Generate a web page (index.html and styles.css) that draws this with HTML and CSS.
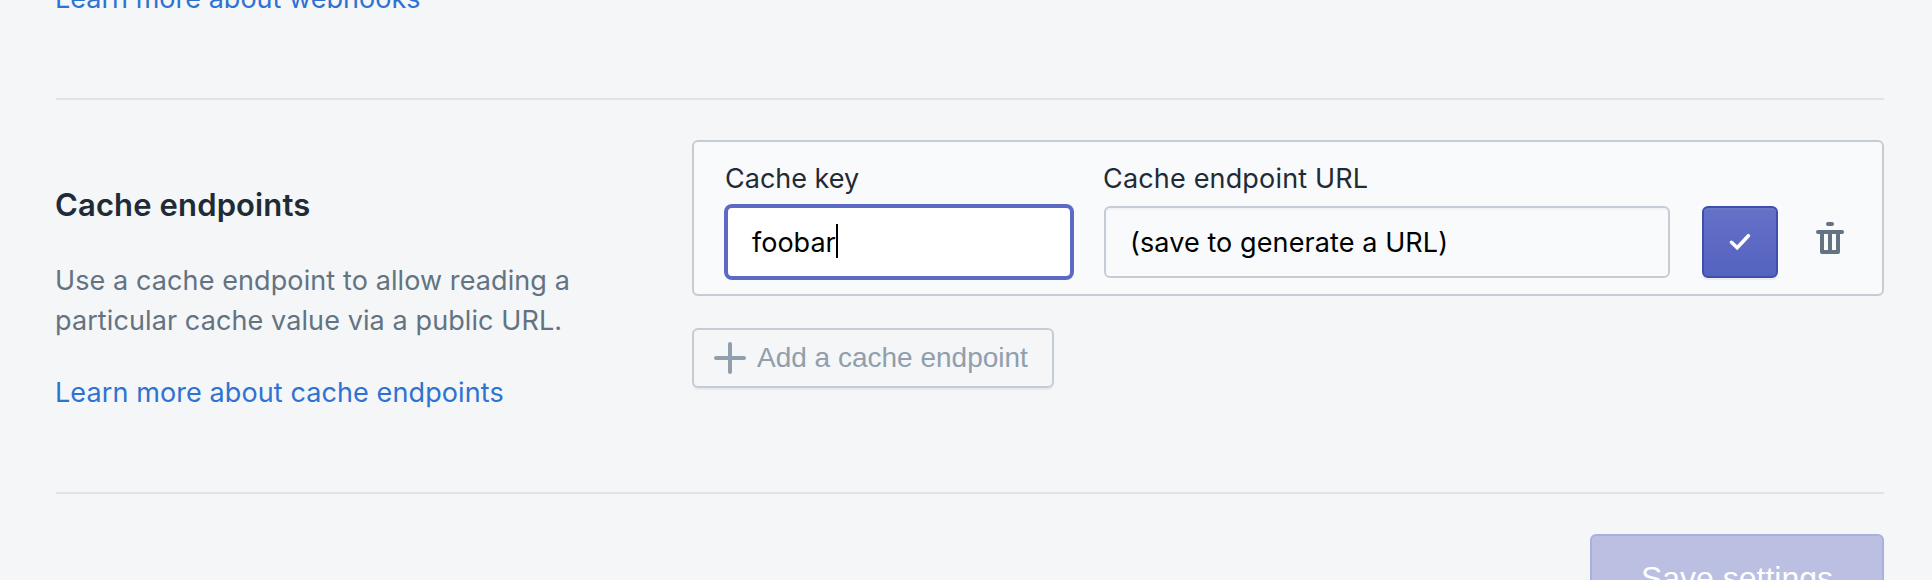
FILE: index.html
```
<!DOCTYPE html>
<html lang="en">
<head>
<meta charset="utf-8">
<title>Settings</title>
<link rel="stylesheet" href="styles.css">
</head>
<body>
<main class="page">
  <section class="section section-webhooks">
    <a class="link link-webhooks">Learn more about webhooks</a>
  </section>
  <section class="section section-endpoints">
    <div class="intro">
      <h2 class="title">Cache endpoints</h2>
      <p class="description">Use a cache endpoint to allow reading a<br>particular cache value via a public URL.</p>
      <a class="link">Learn more about cache endpoints</a>
    </div>
    <div class="content">
      <div class="card">
        <div class="field field-key">
          <label class="label label-key">Cache key</label>
          <div class="input input-focused"><span>foobar</span><i class="caret"></i></div>
        </div>
        <div class="field field-url">
          <label class="label label-url">Cache endpoint URL</label>
          <div class="input input-readonly"><span>(save to generate a URL)</span></div>
        </div>
        <button class="confirm" aria-label="Save endpoint">
          <svg class="icon" viewBox="0 0 20 20"><path d="M5.75 10.15 8.6 12.85 14.2 6.85" fill="none" stroke="#fff" stroke-width="1.8" stroke-linecap="round"/></svg>
        </button>
        <button class="remove" aria-label="Delete endpoint">
          <svg class="icon" viewBox="0 0 20 20"><path fill="#637381" fill-rule="evenodd" d="M16 6a1 1 0 1 1 0 2h-1v9a1 1 0 0 1-1 1H6a1 1 0 0 1-1-1V8H4a1 1 0 1 1 0-2h12zM9 4a1 1 0 1 1 0-2h2a1 1 0 1 1 0 2H9zm2 12h2V8h-2v8zm-4 0h2V8H7v8z"/></svg>
        </button>
      </div>
      <button class="add">
        <svg class="icon" viewBox="0 0 20 20"><path fill="#919eab" d="M17 9h-6V3a1 1 0 1 0-2 0v6H3a1 1 0 1 0 0 2h6v6a1 1 0 1 0 2 0v-6h6a1 1 0 1 0 0-2"/></svg>
        <span>Add a cache endpoint</span>
      </button>
    </div>
  </section>
  <footer class="footer">
    <button class="save">Save settings</button>
  </footer>
</main>
</body>
</html>
```
FILE: styles.css
```
* { box-sizing: border-box; }
html, body { margin: 0; height: 580px; overflow: hidden; }
body {
  background: #f4f6f8;
  color: #212b36;
  font: 27px/40px Inter, "Liberation Sans", sans-serif;
  letter-spacing: .1px;
  white-space: nowrap;
}
button { margin: 0; padding: 0; background: none; border: 0; font-family: "Liberation Sans", Arial, sans-serif; }
.page { display: flow-root; height: 580px; overflow: hidden; padding: 0 48px 0 56px; }
.section { border-bottom: 2px solid #dfe3e8; }
.section-webhooks { display: flow-root; height: 100px; }
.link { display: block; margin-left: -1px; color: #2e72d2; }
.link-webhooks { margin-top: -21px; letter-spacing: .02px; }
.section-endpoints { display: grid; grid-template-columns: 636px 1192px; height: 394px; }
.intro { padding-top: 85px; }
.title { margin: 0 0 36px -1px; font-size: 31px; font-weight: 600; line-height: 40px; letter-spacing: .13px; }
.description { margin: 0 0 32px -1px; color: #637381; }
.content { padding-top: 40px; }
.card {
  display: flex;
  align-items: flex-end;
  height: 156px;
  padding: 0 32px 16px;
  border: 2px solid #c4cdd5;
  border-radius: 6px;
  background: #f9fafc;
}
.field-key { width: 346px; margin-right: 32px; }
.field-url { width: 566px; margin-right: 32px; }
.label { display: block; margin: 0 0 7px -1px; }
.label-key { letter-spacing: 0; }
.label-url { letter-spacing: .17px; }
.input { display: flex; align-items: center; height: 72px; padding: 2px 0 0 24px; border: 2px solid #c4cdd5; border-radius: 6px; color: #000; }
.input-focused { border-color: #5c6ac4; background: #fff; box-shadow: 0 0 0 2px #5c6ac4; letter-spacing: 0; }
.input-readonly { box-shadow: inset 0 2px 0 rgba(99, 115, 129, .05); }
.caret { width: 2px; height: 34px; margin: -4px 0 0; background: #000; }
.icon { display: block; width: 40px; height: 40px; flex: none; }
.confirm {
  display: flex;
  align-items: center;
  justify-content: center;
  width: 76px;
  height: 72px;
  margin-right: 32px;
  border: 2px solid #3f4eae;
  border-radius: 6px;
  background: linear-gradient(#6371c7, #5563c1);
  box-shadow: inset 0 2px 0 #6b78c9, 0 2px 0 rgba(22, 29, 37, .06);
}
.remove { margin-bottom: 20px; }
.add {
  display: flex;
  align-items: center;
  width: 362px;
  height: 60px;
  margin-top: 32px;
  padding-left: 16px;
  gap: 7px;
  border: 2px solid #c4cdd5;
  border-radius: 6px;
  box-shadow: 0 2px 0 rgba(22, 29, 37, .05);
  color: #919eab;
  font-size: 28px;
}
.footer { display: flex; justify-content: flex-end; padding-top: 40px; }
.save {
  width: 294px;
  height: 88px;
  border: 2px solid #a9b0dd;
  border-radius: 6px;
  background: #bbbfe2;
  color: #fff;
  font-size: 32px;
}
```
